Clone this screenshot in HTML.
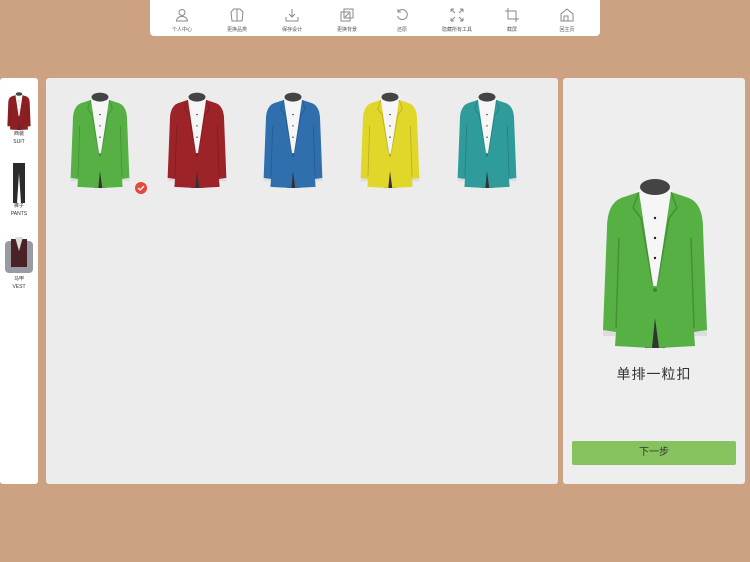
<!DOCTYPE html>
<html><head><meta charset="utf-8"><style>
body{margin:0;width:750px;height:562px;overflow:hidden;background:#cda283;font-family:"Liberation Sans","Noto Sans CJK SC",sans-serif;position:relative}
.tb{position:absolute;left:150px;top:0;width:450px;height:36px;background:#fff;border-radius:0 0 4px 4px}
.ti{position:absolute;top:8px;width:56px;text-align:center;font-size:5px;color:#555}
.ti svg{display:block;margin:0 auto 4px}
.panel{position:absolute;top:78px;height:406px;border-radius:3px}
.side{left:0;width:38px;background:#fff}
.mid{left:46px;width:512px;background:#ececec}
.right{left:563px;width:182px;background:#eeeeee}
.lab{position:absolute;width:38px;text-align:center;font-size:5px;color:#333;line-height:8px}
.btn{position:absolute;left:9px;top:363px;width:164px;height:24px;background:#86c35f;border-radius:2px;text-align:center;line-height:24px;font-size:10px;color:#333}
.name{position:absolute;left:0;width:182px;top:286px;text-align:center;font-size:14px;color:#333;letter-spacing:1px}
</style></head><body>
<svg width="0" height="0" style="position:absolute"><defs>
<symbol id="j" viewBox="0 0 120 170">
<polygon points="52,100 68,100 70,170 50,170" fill="#333"/>
<rect x="8" y="150" width="14" height="8" fill="#ddd"/><rect x="98" y="150" width="14" height="8" fill="#ddd"/>
<polygon points="42,12 78,12 63,112 57,112" fill="#f6f6f6"/>
<ellipse cx="60" cy="9" rx="15" ry="8" fill="#444"/>
<path d="M44,14 L26,20 Q12,26 12,50 L8,152 L21,154 L20,168 L57,170 L60,140 L64,170 L100,168 L99,154 L112,152 L108,50 Q108,26 94,20 L76,14 L62,108 L58,108 Z" fill="currentColor"/>
<path d="M44,14 L38,30 L46,40 L58,108 M76,14 L82,30 L74,40 L62,108 M24,60 L21,150 M96,60 L99,150" stroke="#000" stroke-opacity=".18" stroke-width="1.5" fill="none"/>
<circle cx="60" cy="40" r="1.2" fill="#222"/><circle cx="60" cy="60" r="1.2" fill="#222"/><circle cx="60" cy="80" r="1.2" fill="#222"/>
<circle cx="60" cy="112" r="2" fill="#000" fill-opacity=".25"/>
</symbol></defs></svg>

<div class="tb">
<div class="ti" style="left:4px"><svg width="14" height="14" viewBox="0 0 14 14" fill="none" stroke="#888"><circle cx="7" cy="4.5" r="3"/><path d="M1.5,13 Q2,8.5 7,8.5 Q12,8.5 12.5,13 Z"/></svg>个人中心</div>
<div class="ti" style="left:59px"><svg width="14" height="14" viewBox="0 0 14 14" fill="none" stroke="#888"><path d="M4,1 L10,1 L13,4 L12,13 L2,13 L1,4 Z M7,1 L7,13"/></svg>更换品类</div>
<div class="ti" style="left:114px"><svg width="14" height="14" viewBox="0 0 14 14" fill="none" stroke="#888"><path d="M7,1 L7,9 M4,6 L7,9 L10,6 M1,9 L1,13 L13,13 L13,9"/></svg>保存设计</div>
<div class="ti" style="left:169px"><svg width="14" height="14" viewBox="0 0 14 14" fill="none" stroke="#888"><rect x="1" y="4" width="9" height="9"/><rect x="4" y="1" width="9" height="9"/><path d="M5,9 L9,5"/></svg>更换背景</div>
<div class="ti" style="left:224px"><svg width="14" height="14" viewBox="0 0 14 14" fill="none" stroke="#888"><path d="M3,4 A5,5 0 1 1 2.5,8 M3,1 L3,4 L6,4"/></svg>还原</div>
<div class="ti" style="left:279px"><svg width="14" height="14" viewBox="0 0 14 14" fill="none" stroke="#888"><path d="M1,1 L5,5 M1,1 L1,4 M1,1 L4,1 M13,1 L9,5 M13,1 L10,1 M13,1 L13,4 M1,13 L5,9 M1,13 L1,10 M1,13 L4,13 M13,13 L9,9 M13,13 L13,10 M13,13 L10,13"/></svg>隐藏所有工具</div>
<div class="ti" style="left:334px"><svg width="14" height="14" viewBox="0 0 14 14" fill="none" stroke="#888"><path d="M3,0 L3,11 L14,11 M0,3 L11,3 L11,14"/></svg>截屏</div>
<div class="ti" style="left:389px"><svg width="14" height="14" viewBox="0 0 14 14" fill="none" stroke="#888"><path d="M1,6 L7,1 L13,6 L13,13 L1,13 Z"/><rect x="4" y="8" width="4" height="5"/></svg>回主页</div>
</div>

<div class="panel side">
<svg style="position:absolute;left:5px;top:14px;color:#8b1f22" width="28" height="38"><use href="#j"/></svg>
<div class="lab" style="top:52px">西装<br>SUIT</div>
<svg style="position:absolute;left:12px;top:85px" width="14" height="40" viewBox="0 0 14 40"><path d="M1,0 L13,0 L13,40 L9,40 L7,10 L5,40 L1,40 Z" fill="#2b2b2b"/></svg>
<div class="lab" style="top:124px">裤子<br>PANTS</div>
<svg style="position:absolute;left:5px;top:157px" width="28" height="40" viewBox="0 0 28 40"><rect x="0" y="6" width="28" height="32" rx="4" fill="#9a9aa5"/><path d="M6,4 L22,4 L22,32 L6,32 Z" fill="#4a2226"/><path d="M10,2 L18,2 L14,16 Z" fill="#ddd"/></svg>
<div class="lab" style="top:197px">马甲<br>VEST</div>
</div>

<div class="panel mid">
<svg style="position:absolute;left:20px;top:14px;color:#56b044" width="68" height="96"><use href="#j"/></svg>
<svg style="position:absolute;left:117px;top:14px;color:#9c2328" width="68" height="96"><use href="#j"/></svg>
<svg style="position:absolute;left:213px;top:14px;color:#2f6fae" width="68" height="96"><use href="#j"/></svg>
<svg style="position:absolute;left:310px;top:14px;color:#e1d62a" width="68" height="96"><use href="#j"/></svg>
<svg style="position:absolute;left:407px;top:14px;color:#2f9b9a" width="68" height="96"><use href="#j"/></svg>
<svg style="position:absolute;left:89px;top:104px" width="12" height="12" viewBox="0 0 12 12"><circle cx="6" cy="6" r="6" fill="#e5483b"/><path d="M3,6 L5.2,8 L9,4" stroke="#fff" stroke-width="1.3" fill="none"/></svg>
</div>

<div class="panel right">
<svg style="position:absolute;left:32px;top:100px;color:#56b044" width="120" height="170"><use href="#j"/></svg>
<div class="name">单排一粒扣</div>
<div class="btn">下一步</div>
</div>
</body></html>
